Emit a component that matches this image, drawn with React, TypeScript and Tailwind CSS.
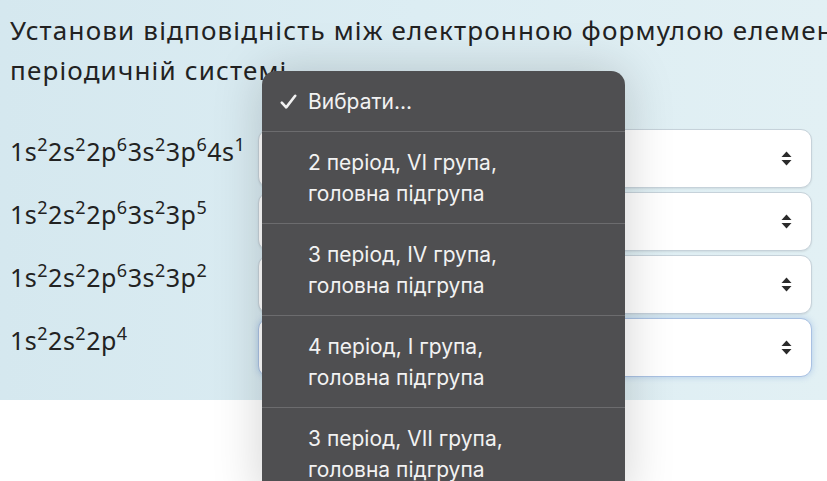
import React from "react";

const formulas: { base: string; sup: string }[][] = [
  [
    { base: "1s", sup: "2" },
    { base: "2s", sup: "2" },
    { base: "2p", sup: "6" },
    { base: "3s", sup: "2" },
    { base: "3p", sup: "6" },
    { base: "4s", sup: "1" },
  ],
  [
    { base: "1s", sup: "2" },
    { base: "2s", sup: "2" },
    { base: "2p", sup: "6" },
    { base: "3s", sup: "2" },
    { base: "3p", sup: "5" },
  ],
  [
    { base: "1s", sup: "2" },
    { base: "2s", sup: "2" },
    { base: "2p", sup: "6" },
    { base: "3s", sup: "2" },
    { base: "3p", sup: "2" },
  ],
  [
    { base: "1s", sup: "2" },
    { base: "2s", sup: "2" },
    { base: "2p", sup: "4" },
  ],
];

const options = [
  ["2 період, VI група,", "головна підгрупа"],
  ["3 період, IV група,", "головна підгрупа"],
  ["4 період, I група,", "головна підгрупа"],
  ["3 період, VII група,", "головна підгрупа"],
];

function SortArrows() {
  return (
    <svg width="11" height="15" viewBox="0 0 11 15" className="text-[#2b2b2b]">
      <path d="M5.5 0.5 L10.5 6 H0.5 Z" fill="currentColor" />
      <path d="M5.5 14.5 L10.5 9 H0.5 Z" fill="currentColor" />
    </svg>
  );
}

function Check() {
  return (
    <svg width="17" height="16" viewBox="0 0 17 16" className="text-[#f2f2f2]">
      <path
        d="M1.8 8.6 L6.2 13.4 L15.2 1.8"
        fill="none"
        stroke="currentColor"
        strokeWidth="2.6"
        strokeLinecap="round"
        strokeLinejoin="round"
      />
    </svg>
  );
}

function Formula({ parts }: { parts: { base: string; sup: string }[] }) {
  return (
    <span className="tracking-[0.02em]">
      {parts.map((p, i) => (
        <span key={i}>
          {p.base}
          <sup className="text-[18px] top-[-10px]">{p.sup}</sup>
        </span>
      ))}
    </span>
  );
}

export default function App() {
  return (
    <div className="relative w-[827px] h-[481px] overflow-hidden bg-white font-['Noto_Sans',sans-serif]">
      <div className="h-[400px] bg-gradient-to-r from-[#d5e8ef] via-[#dcedf3] to-[#e2f0f4] pl-[10px] pt-[10px]">
        <div className="text-[26px] leading-[40px] tracking-[0.045em] text-[#222] whitespace-nowrap">
          <div>Установи відповідність між електронною формулою елементів</div>
          <div>періодичній системі.</div>
        </div>

        <div className="mt-[39px] flex flex-col gap-[4px] w-[802px]">
          {formulas.map((f, i) => (
            <div key={i} className="flex">
              <div className="w-[248px] pt-[4px] text-[25px] leading-[36px] text-[#222]">
                <Formula parts={f} />
              </div>
              <div
                className={`flex-1 h-[59px] rounded-[11px] border bg-white flex items-center justify-end pr-[19px] ${
                  i === 3
                    ? "border-[#a9c1e2] shadow-[0_0_6px_rgba(120,160,220,0.45)]"
                    : "border-[#c6d2da] shadow-[0_1px_2px_rgba(0,0,0,0.08)]"
                }`}
              >
                <SortArrows />
              </div>
            </div>
          ))}
        </div>
      </div>

      <div className="absolute left-[262px] top-[71px] w-[363px] h-[430px] rounded-t-[14px] bg-[#4f4f51] text-[#f2f2f2] font-['Inter',sans-serif] shadow-[0_0_50px_rgba(0,0,0,0.18)]">
        <div className="h-[60px] flex items-center pt-[2px] pl-[18px] text-[21px]">
          <span className="w-[28px] flex items-center">
            <Check />
          </span>
          <span>Вибрати...</span>
        </div>
        {options.map((o, i) => (
          <div
            key={i}
            className="h-[92px] border-t border-[#6c6c6e] flex flex-col justify-center pl-[46px] text-[21px] leading-[31px]"
          >
            <div>{o[0]}</div>
            <div>{o[1]}</div>
          </div>
        ))}
      </div>
    </div>
  );
}
